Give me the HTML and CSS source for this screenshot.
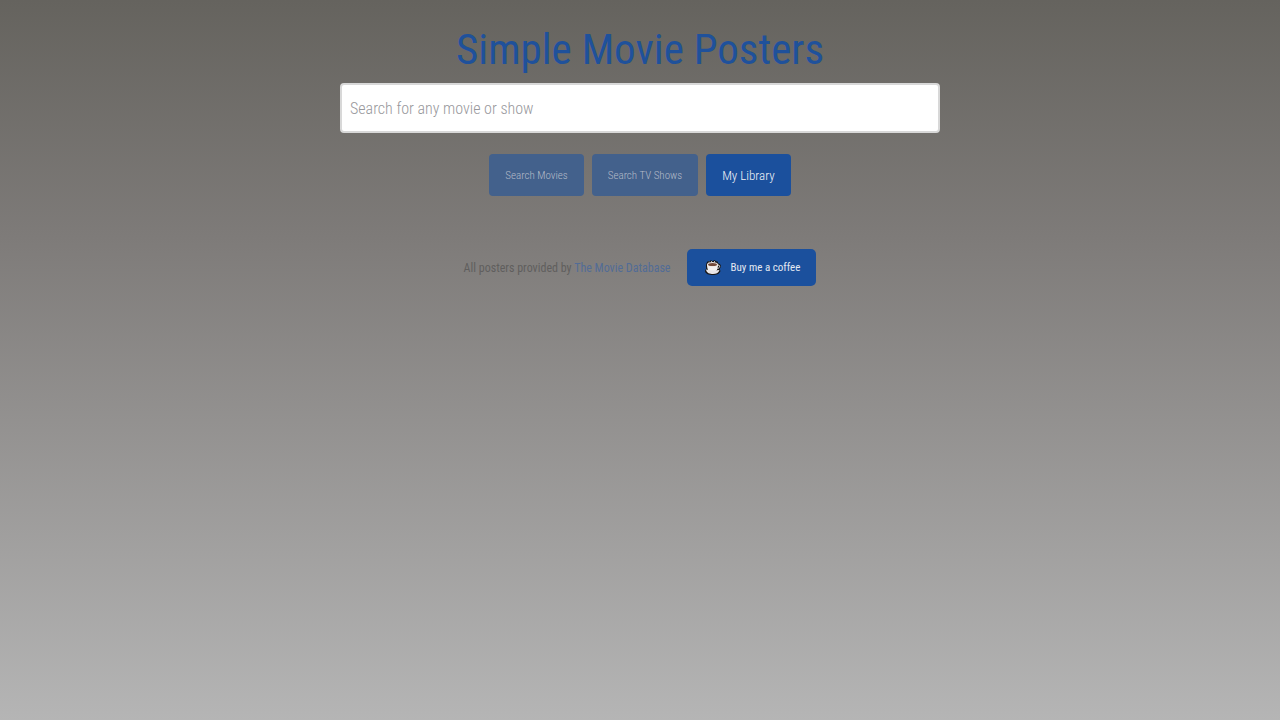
FILE: index.html
```html
<!DOCTYPE html>
<html lang="en">
<head>
    <meta charset="UTF-8">
    <meta name="viewport" content="width=device-width, initial-scale=1">
    <title>Simple Movie Posters</title>
    <link rel="stylesheet" href="styles.css">
</head>
<body>

    <header>
        <h1>Simple Movie Posters</h1>
    </header>

    <main>
        <form class="search-form">
            <input type="text" class="search-box" aria-label="Search for any movie or show" placeholder="Search for any movie or show">
            <div class="buttons">
                <button type="submit" class="btn" disabled>Search Movies</button>
                <button type="submit" class="btn" disabled>Search TV Shows</button>
                <button type="button" class="btn btn-library">My Library</button>
            </div>
        </form>
    </main>

    <footer>
        <p>All posters provided by <a href="#">The Movie Database</a></p>
        <a class="coffee" href="#">
            <svg class="cup" viewBox="0 0 20 20" aria-hidden="true">
                <path d="M3.5 5 5 3 6.5 3.4 8 2 9.5 3.2 11.5 2 13 3.2 14.5 3.5 15.3 5.5C18.5 6 18.5 9 16.5 11L17.5 13C16.5 16.3 13 17 9.8 17S2 16 2 12.7L3.3 10.5Q2.5 8 3.5 5Z" fill="#191514"/>
                <path d="M4 6.5H15C15 11 14 14 9.5 14S4 11 4 6.5Z" fill="#f5f1f0"/>
                <path d="M3 11.5Q10 13 16.5 12C15.5 15 13 16 10 16S3.5 15.2 3 11.5Z" fill="#e9e6e8"/>
                <ellipse cx="9.5" cy="6.5" rx="5.5" ry="2.5" fill="#eee7e3"/>
                <ellipse cx="9.5" cy="6.5" rx="4.5" ry="1.6" fill="#754938"/>
                <path d="M6 4.6V3.8M8.5 4.2V3.2M11.5 4.2V3.2" stroke="#ddd" stroke-width="1"/>
                <path d="M15 7C17.5 7 17 10 14.5 10.5" fill="none" stroke="#eee" stroke-width="1"/>
            </svg>
            <span>Buy me a coffee</span>
        </a>
    </footer>

</body>
</html>
```
FILE: styles.css
```css
* {
    box-sizing: border-box;
}
body {
    margin: 0;
    padding: 16px 20px;
    min-height: 100vh;
    font-family: "Roboto Condensed", Roboto, sans-serif;
    background: linear-gradient(#65635e, #7e7b79 33%, #b5b5b5);
}
h1 {
    margin: 0;
    font-size: 43px;
    line-height: 67px;
    font-weight: normal;
    text-align: center;
    color: #1f519b;
}
.search-form {
    max-width: 600px;
    margin: 0 auto;
}
.search-box {
    display: block;
    width: 100%;
    height: 50px;
    padding: 0 8px;
    border: 2px solid #d8d8d8;
    border-radius: 4px;
    background: #fff;
    font-family: inherit;
    font-size: 16px;
    font-weight: 300;
}
.search-box::placeholder {
    color: #98989c;
}
.buttons {
    display: flex;
    justify-content: center;
    gap: 8px;
    margin-top: 21px;
}
.btn {
    height: 42px;
    padding: 0 16px;
    border: none;
    border-radius: 4px;
    background: #1b509d;
    color: #f2f4f8;
    font-family: inherit;
    font-size: 11px;
    font-weight: 300;
    cursor: pointer;
}
.btn:disabled {
    background: #43618c;
    color: #b4bbc8;
    cursor: default;
}
.btn-library {
    font-size: 13px;
}
footer {
    display: flex;
    justify-content: center;
    align-items: center;
    gap: 16px;
    margin-top: 53px;
    font-size: 12px;
    color: #605e5d;
}
footer p {
    margin: 0;
}
footer a {
    color: #526c96;
    text-decoration: none;
}
footer .coffee {
    display: flex;
    align-items: center;
    gap: 8px;
    height: 37px;
    padding: 0 16px;
    border-radius: 5px;
    background: #1b509d;
    color: #e3e8f1;
    font-size: 11px;
}
.cup {
    width: 20px;
    height: 20px;
}
```
